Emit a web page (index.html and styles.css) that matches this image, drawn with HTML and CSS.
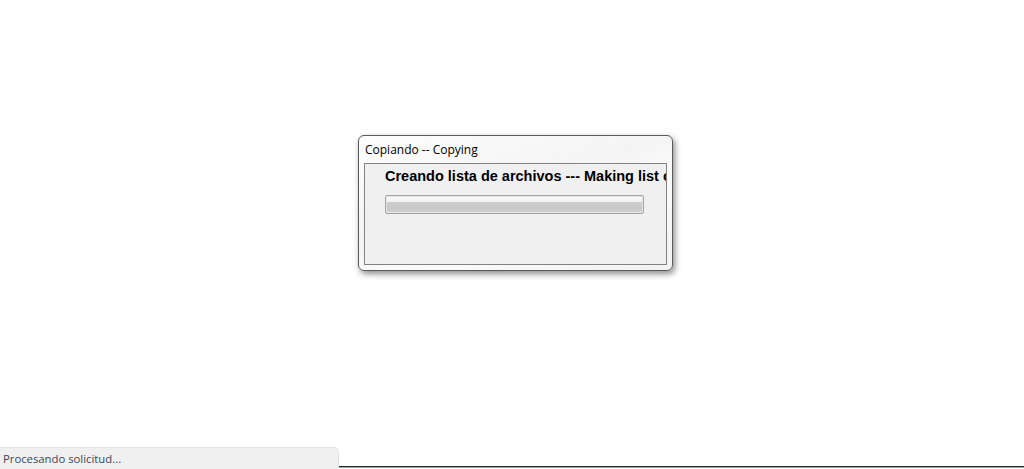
FILE: index.html
```html
<!DOCTYPE html>
<html lang="es">
<head>
    <meta charset="UTF-8">
    <meta name="viewport" content="width=device-width, initial-scale=1.0">
    <title>Copiando</title>
    <link rel="stylesheet" href="styles.css">
</head>
<body>
    <div class="page">
        <div class="dialog">
            <div class="dialog-title">Copiando -- Copying</div>
            <div class="dialog-body">
                <h4 class="status-msg">Creando lista de archivos --- Making list of files</h4>
                <div class="progress">
                    <div class="progress-fill"></div>
                </div>
            </div>
        </div>

        <footer class="footer">
            <div class="statusbar">Procesando solicitud...</div>
            <div class="footer-line"></div>
        </footer>
    </div>
</body>
</html>
```

FILE: styles.css
```css
* {
    padding: 0;
    margin: 0;
    box-sizing: border-box;
}
body {
    background-color: #fff;
    font-family: "Open Sans", "Noto Sans", sans-serif;
}
.page {
    height: 100vh;
    display: flex;
    flex-direction: column;
}

.dialog {
    margin-top: 135px;
    margin-left: 358px;
    width: 315px;
    height: 136px;
    border: 1px solid #5a5a5a;
    border-radius: 6px;
    background: linear-gradient(160deg, #fdfdfd 0%, #f4f4f4 45%, #fbfbfb 60%, #f2f2f2 100%);
    box-shadow: 2px 3px 6px rgba(0, 0, 0, 0.45);
    display: flex;
    flex-direction: column;
    padding: 0 5px 5px 5px;
}
.dialog-title {
    height: 27px;
    padding-left: 1px;
    padding-top: 5px;
    font-size: 12px;
    color: #000;
}
.dialog-body {
    flex: 1;
    border: 1px solid #828282;
    background-color: #f0f0f0;
    padding: 4px 0 0 20px;
    overflow: hidden;
}
.status-msg {
    font-family: "Liberation Sans", Arial, sans-serif;
    font-size: 14.5px;
    font-weight: bold;
    color: #000;
    white-space: nowrap;
    line-height: 16px;
}
.progress {
    margin-top: 11px;
    width: 259px;
    height: 19px;
    border: 1px solid #a4a4a4;
    border-radius: 2px;
    background-color: #e6e6e6;
    padding: 1px;
}
.progress-fill {
    height: 100%;
    border-radius: 1px;
    background: linear-gradient(to bottom, #fafafa 0%, #f0f0f0 30%, #cdcdcd 34%, #c8c8c8 80%, #d4d4d4 100%);
}

.footer {
    margin-top: auto;
    display: flex;
    align-items: flex-end;
}
.statusbar {
    width: 339px;
    height: 22px;
    background-color: #f0f0f0;
    border: 1px solid #e2e2e2;
    border-bottom: none;
    border-left: none;
    border-radius: 0 5px 0 0;
    padding-left: 3px;
    font-size: 11.3px;
    line-height: 21px;
    color: #3b4656;
}
.footer-line {
    flex: 1;
    height: 3px;
    border-top: 1px solid #262626;
    background-color: #a3aaaa;
    border-bottom: 1px solid #fff;
}
```
